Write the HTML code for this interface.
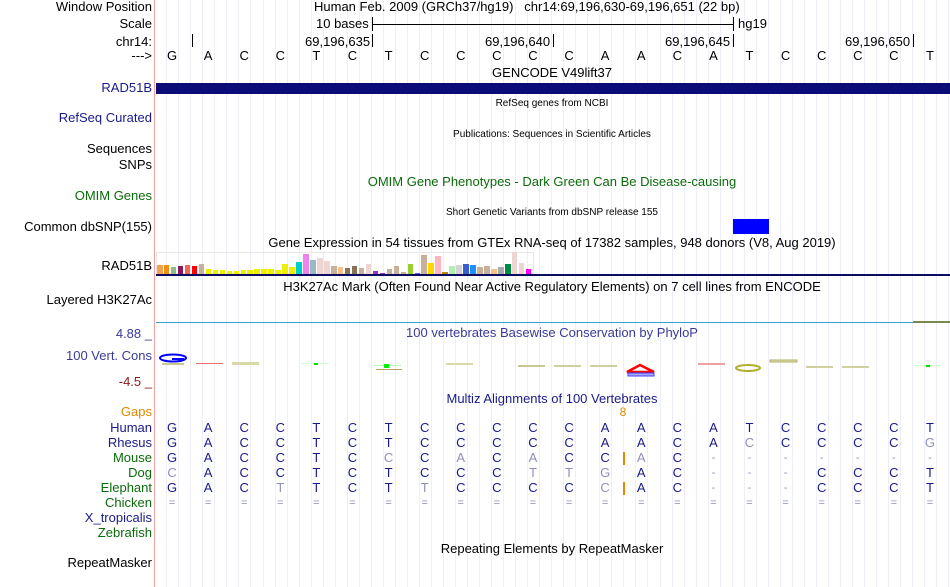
<!DOCTYPE html>
<html><head><meta charset="utf-8"><style>
body{margin:0;width:950px;height:587px;overflow:hidden;background:#fff;font-family:"Liberation Sans",sans-serif;position:relative}
#grid{position:absolute;left:155px;top:0;width:795px;height:587px;background:repeating-linear-gradient(90deg,transparent 0,transparent 11.53px,#dcdcf4 11.53px,#dcdcf4 12.03px)}
#pink{position:absolute;left:154px;top:0;width:1px;height:587px;background:#f4a0a0}
.t{position:absolute;white-space:nowrap;font-size:13px;line-height:14px}
.l{position:absolute;right:798px;white-space:nowrap;font-size:13px;line-height:14px;text-align:right}
.c{position:absolute;white-space:nowrap;transform:translateX(-50%);font-size:13px;line-height:14px}
.s{font-size:10px;line-height:12px}
.b{position:absolute}
.nv{color:#1a1a8a}.gr{color:#0b6b0b}.gy{color:#9090b8}
</style></head><body>
<div id="grid"></div><div id="pink"></div>

<div class="l" style="top:0">Window Position</div>
<div class="l" style="top:17px">Scale</div>
<div class="l" style="top:35px">chr14:</div>
<div class="l" style="top:49px">---&gt;</div>
<div class="l nv" style="top:81px">RAD51B</div>
<div class="l nv" style="top:111px">RefSeq Curated</div>
<div class="l" style="top:142px">Sequences</div>
<div class="l" style="top:158px">SNPs</div>
<div class="l gr" style="top:189px">OMIM Genes</div>
<div class="l" style="top:220px">Common dbSNP(155)</div>
<div class="l" style="top:259px">RAD51B</div>
<div class="l" style="top:293px">Layered H3K27Ac</div>
<div class="l" style="top:327px;color:#3a3a9a">4.88 _</div>
<div class="l" style="top:349px;color:#3a3a9a">100 Vert. Cons</div>
<div class="l" style="top:375px;color:#8b1a1a">-4.5 _</div>
<div class="l" style="top:405px;color:#e08a00">Gaps</div>
<div class="l nv" style="top:421px">Human</div>
<div class="l nv" style="top:436px">Rhesus</div>
<div class="l gr" style="top:451px">Mouse</div>
<div class="l gr" style="top:466px">Dog</div>
<div class="l gr" style="top:481px">Elephant</div>
<div class="l gr" style="top:496px">Chicken</div>
<div class="l nv" style="top:511px">X_tropicalis</div>
<div class="l gr" style="top:526px">Zebrafish</div>
<div class="l" style="top:556px">RepeatMasker</div>

<div class="t" style="left:314px;top:0">Human Feb. 2009 (GRCh37/hg19)&nbsp;&nbsp;&nbsp;chr14:69,196,630-69,196,651 (22 bp)</div>
<div class="t" style="left:316px;top:17px">10 bases</div>
<div class="b" style="left:373px;top:24px;width:360px;height:1px;background:#000"></div>
<div class="b" style="left:372px;top:17px;width:1px;height:14px;background:#000"></div>
<div class="b" style="left:733px;top:17px;width:1px;height:14px;background:#000"></div>
<div class="t" style="left:738px;top:17px">hg19</div>
<div class="b" style="left:192px;top:34px;width:1px;height:13px;background:#000"></div>
<div class="b" style="left:372px;top:34px;width:1px;height:13px;background:#000"></div>
<div class="b" style="left:553px;top:34px;width:1px;height:13px;background:#000"></div>
<div class="b" style="left:733px;top:34px;width:1px;height:13px;background:#000"></div>
<div class="b" style="left:913px;top:34px;width:1px;height:13px;background:#000"></div>
<div class="t" style="left:305px;top:35px">69,196,635</div>
<div class="t" style="left:485px;top:35px">69,196,640</div>
<div class="t" style="left:665px;top:35px">69,196,645</div>
<div class="t" style="left:845px;top:35px">69,196,650</div>
<div id="seq"></div>
<div class="c" style="left:552px;top:66px">GENCODE V49lift37</div>
<div class="b" style="left:156px;top:83px;width:794px;height:11px;background:#0c0c78"></div>
<div class="c s" style="left:552px;top:98px">RefSeq genes from NCBI</div>
<div class="c s" style="left:552px;top:129px">Publications: Sequences in Scientific Articles</div>
<div class="c gr" style="left:552px;top:175px">OMIM Gene Phenotypes - Dark Green Can Be Disease-causing</div>
<div class="c s" style="left:552px;top:207px">Short Genetic Variants from dbSNP release 155</div>
<div class="b" style="left:733px;top:219px;width:36px;height:15px;background:#0000ff"></div>
<div class="c" style="left:552px;top:236px">Gene Expression in 54 tissues from GTEx RNA-seq of 17382 samples, 948 donors (V8, Aug 2019)</div>
<div class="b" style="left:156px;top:252px;width:378px;height:22px;border:1px solid #e8e8e8;box-sizing:border-box"></div>
<div id="bars"></div>
<div class="b" style="left:156px;top:274px;width:794px;height:2px;background:#0c0c60"></div>
<div class="c" style="left:552px;top:280px">H3K27Ac Mark (Often Found Near Active Regulatory Elements) on 7 cell lines from ENCODE</div>
<div class="b" style="left:156px;top:322px;width:757px;height:1px;background:#3ba0d8"></div>
<div class="b" style="left:913px;top:321px;width:37px;height:2px;background:#7a8a4a"></div>
<div class="c" style="left:552px;top:326px;color:#3a3a9a">100 vertebrates Basewise Conservation by PhyloP</div>
<svg class="b" style="left:156px;top:350px" width="794" height="30">
<ellipse cx="17" cy="8" rx="13" ry="3.5" fill="none" stroke="#0000ff" stroke-width="2"/>
<rect x="16" y="8" width="12" height="2" fill="#0000ff"/>
<rect x="6" y="13" width="22" height="2" fill="#c8c890"/>
<rect x="40" y="13" width="27" height="1" fill="#f07070"/>
<rect x="76" y="12" width="27" height="3" fill="#d8d8a8"/>
<rect x="146" y="13" width="27" height="1" fill="#ccffcc"/><rect x="158" y="13" width="4" height="2" fill="#00dd00"/>
<rect x="218" y="15" width="27" height="1" fill="#b0ffb0"/><rect x="228" y="14" width="5" height="4" fill="#00ee00"/><rect x="220" y="19" width="26" height="1" fill="#b8a060"/>
<rect x="290" y="13" width="27" height="2" fill="#d8d8a8"/>
<rect x="362" y="15" width="27" height="2" fill="#c8c890"/>
<rect x="398" y="15" width="27" height="2" fill="#d0d0a0"/>
<rect x="434" y="15" width="27" height="2" fill="#d0d0a0"/>
<path d="M471 22 L484 15 L498 22 Z" fill="none" stroke="#ff0000" stroke-width="2.5"/>
<rect x="472" y="23" width="26" height="3" fill="#a8a8ff" stroke="#4040ff" stroke-width="1"/>
<rect x="542" y="13" width="27" height="2" fill="#f0a0a0"/>
<ellipse cx="592" cy="18" rx="12" ry="3" fill="none" stroke="#b0b030" stroke-width="2"/>
<rect x="614" y="10" width="27" height="2" fill="#e0e0b0" stroke="#b0b060" stroke-width="1"/>
<rect x="650" y="16" width="27" height="2" fill="#d0d0a0"/>
<rect x="686" y="16" width="27" height="2" fill="#d0d0a0"/>
<rect x="758" y="15" width="27" height="1" fill="#ccffcc"/><rect x="770" y="15" width="4" height="2" fill="#00dd00"/>
</svg>
<div class="c nv" style="left:552px;top:392px">Multiz Alignments of 100 Vertebrates</div>
<div class="c" style="left:623px;top:405px;font-size:12px;color:#e08a00">8</div>
<div class="b" style="left:623px;top:452px;width:2px;height:13px;background:#e08a00"></div>
<div class="b" style="left:623px;top:482px;width:2px;height:13px;background:#e08a00"></div>
<div id="aln"></div>
<div class="c" style="left:552px;top:542px">Repeating Elements by RepeatMasker</div>
<script>
var W=794/22,X0=154;
function col(i){return X0+W*(i+0.5)}
var refSeq="GACCTCTCCCCCAACATCCCCT",h="";
for(var i=0;i<22;i++)h+='<div class="c" style="left:'+col(i)+'px;top:49px">'+refSeq[i]+'</div>';
document.getElementById('seq').innerHTML=h;
var rows=[
["GACCTCTCCCCCAACATCCCCT","0000000000000000000000",421],
["GACCTCTCCCCCAACACCCCCG","0000000000000000100001",436],
["GACCTCCCACACCAC-------","0000001010100100000000",451],
["CACCTCTCCCTTGAC---CCCT","1000000000111000000000",466],
["GACTTCTTCCCCCAC---CCCT","0001000100001000000000",481],
["======================","1111111111111111111111",496]];
h="";
rows.forEach(function(r){for(var i=0;i<22;i++){var ch=r[0][i],g=r[1][i]=='1'||ch=='-';
h+='<div class="c '+(g?'gy':'nv')+'" style="left:'+col(i)+'px;top:'+r[2]+'px;'+(ch=='-'||ch=='='?'font-size:11px;':'')+'">'+ch+'</div>';}});
document.getElementById('aln').innerHTML=h;
var bars=[["#f5a04f",9],["#f09010",9],["#8fbc8f",7],["#8b1a5a",8],["#ee6a50",9],["#ff0000",8],["#c8b09a",10],["#eeee00",5],["#eeee00",4],["#eeee00",4],["#eeee00",3],["#eeee00",3],["#eeee00",4],["#eeee00",4],["#eeee00",5],["#eeee00",5],["#eeee00",5],["#eeee00",4],["#eeee00",10],["#eeee00",7],["#00cdcd",12],["#ee82ee",20],["#9ab8c8",14],["#eed5d2",16],["#eed5d2",13],["#c8b09a",8],["#f4c28a",7],["#8b7355",6],["#8b7355",8],["#c8b09a",6],["#eed5d2",10],["#9932cc",3],["#9932cc",1],["#c8b09a",5],["#c8b09a",8],["#c8b09a",2],["#9acd32",10],["#6060ff",1],["#c8b09a",19],["#ffd700",11],["#ffb6c1",18],["#b8860b",2],["#b4eeb4",8],["#d3d3d3",9],["#3a5fcd",10],["#1e90ff",9],["#c8b09a",7],["#c8b09a",8],["#f4c28a",5],["#aaaaaa",7],["#008b45",10],["#eed5d2",22],["#eed5d2",11],["#ff00ff",5]];
h="";bars.forEach(function(b,i){h+='<div class="b" style="left:'+(157+i*6.96)+'px;top:'+(274-b[1])+'px;width:5.5px;height:'+b[1]+'px;background:'+b[0]+'"></div>'});
document.getElementById('bars').innerHTML=h;
</script>
</body></html>
